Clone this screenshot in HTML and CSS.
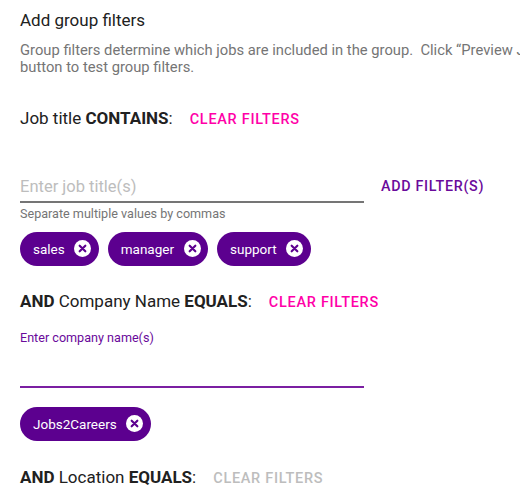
FILE: index.html
```html
<!DOCTYPE html>
<html>
<head>
<meta charset="utf-8">
<link rel="stylesheet" href="styles.css">
</head>
<body>
<div class="page">
  <h1 class="title">Add group filters</h1>
  <p class="desc">Group filters determine which jobs are included in the group.&nbsp; Click “Preview Jobs” button to test group filters.</p>

  <section class="filter filter-first">
    <div class="filter-head">
      <span class="label">Job title <b>CONTAINS</b>:</span>
      <button class="clear">CLEAR FILTERS</button>
    </div>
    <div class="field-row">
      <div class="field">
        <div class="input placeholder">Enter job title(s)</div>
      </div>
      <button class="add">ADD FILTER(S)</button>
    </div>
    <div class="helper">Separate multiple values by commas</div>
    <div class="chips">
      <span class="chip">sales<span class="x"><svg viewBox="0 0 18 18" width="17" height="17"><circle cx="9" cy="9" r="9" fill="#fff"/><path d="M6 6 12 12M12 6 6 12" stroke="#5c008f" stroke-width="2.3" stroke-linecap="round"/></svg></span></span>
      <span class="chip">manager<span class="x"><svg viewBox="0 0 18 18" width="17" height="17"><circle cx="9" cy="9" r="9" fill="#fff"/><path d="M6 6 12 12M12 6 6 12" stroke="#5c008f" stroke-width="2.3" stroke-linecap="round"/></svg></span></span>
      <span class="chip">support<span class="x"><svg viewBox="0 0 18 18" width="17" height="17"><circle cx="9" cy="9" r="9" fill="#fff"/><path d="M6 6 12 12M12 6 6 12" stroke="#5c008f" stroke-width="2.3" stroke-linecap="round"/></svg></span></span>
    </div>
  </section>

  <section class="filter">
    <div class="filter-head">
      <span class="label"><b>AND</b> Company Name <b>EQUALS</b>:</span>
      <button class="clear">CLEAR FILTERS</button>
    </div>
    <div class="field focused">
      <div class="float-label">Enter company name(s)</div>
      <div class="input"></div>
    </div>
    <div class="chips chips-company">
      <span class="chip">Jobs2Careers<span class="x"><svg viewBox="0 0 18 18" width="17" height="17"><circle cx="9" cy="9" r="9" fill="#fff"/><path d="M6 6 12 12M12 6 6 12" stroke="#5c008f" stroke-width="2.3" stroke-linecap="round"/></svg></span></span>
    </div>
  </section>

  <section class="filter filter-last">
    <div class="filter-head">
      <span class="label"><b>AND</b> Location <b>EQUALS</b>:</span>
      <button class="clear disabled">CLEAR FILTERS</button>
    </div>
  </section>
</div>
</body>
</html>
```

FILE: styles.css
```css
* { box-sizing: border-box; }
html, body { margin: 0; padding: 0; background: #fff; }
body {
  font-family: Roboto, "Noto Sans", "Liberation Sans", sans-serif;
  color: #212121;
  width: 520px;
  height: 499px;
  overflow: hidden;
}
.page {
  padding: 10px 0 0 20px;
  width: 520px;
  overflow: hidden;
}
.title {
  margin: 0;
  font-size: 17px;
  font-weight: 400;
  line-height: 20px;
  color: #212121;
}
.desc {
  margin: 12px 0 0;
  font-size: 14.75px;
  line-height: 17px;
  color: #757575;
  width: 560px;
}
.filter { margin-top: 25px; }
.filter-first { margin-top: 31.5px; }
.filter-last { margin-top: 26px; }
.filter-head {
  display: flex;
  align-items: baseline;
  gap: 17px;
  font-size: 17px;
  line-height: 20px;
}
.label b { font-weight: 700; }
.clear {
  border: 0;
  background: none;
  padding: 0;
  font-family: inherit;
  font-size: 14.5px;
  font-weight: 500;
  letter-spacing: 0.7px;
  color: #ff00a8;
}
.clear.disabled { color: #bdbdbd; }
.field-row {
  display: flex;
  align-items: flex-start;
  margin-top: 49px;
}
.field { width: 344px; }
.input {
  font-size: 16.5px;
  line-height: 20px;
  padding-bottom: 4.3px;
  border-bottom: 2px solid #757575;
}
.placeholder { color: #bdbdbd; }
.add {
  border: 0;
  background: none;
  padding: 0;
  margin: 1px 0 0 17px;
  font-family: inherit;
  font-size: 14.3px;
  font-weight: 500;
  letter-spacing: 0.7px;
  color: #6a0a9b;
  line-height: 16px;
}
.helper {
  margin-top: 3.5px;
  font-size: 12.6px;
  line-height: 15px;
  color: #757575;
}
.chips {
  display: flex;
  gap: 9px;
  margin-top: 10.5px;
}
.chip {
  display: inline-flex;
  align-items: center;
  height: 34px;
  padding: 0 7.5px 0 13px;
  border-radius: 17px;
  background: #5c008f;
  color: #fff;
  font-size: 13.5px;
}
.x { display: flex; margin-left: 9.5px; }
.focused { margin-top: 19px; }
.float-label {
  font-size: 12.6px;
  line-height: 15px;
  color: #6a0a9b;
}
.focused .input {
  height: 43px;
  padding: 0;
  border-bottom: 2px solid #7b1fa2;
}
.chips-company { margin-top: 19px; }
```
